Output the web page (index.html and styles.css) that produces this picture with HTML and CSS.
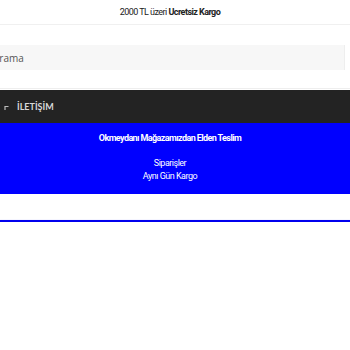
FILE: index.html
```html
<!DOCTYPE html>
<html lang="tr">
<head>
    <meta charset="UTF-8">
    <meta name="viewport" content="width=device-width, initial-scale=1.0">
    <title>İletişim</title>
    <link rel="stylesheet" href="styles.css">
</head>
<body>
  <div class="topbar">2000 TL üzeri <b>Ucretsiz Kargo</b></div>

  <div class="search-row">
    <input type="text" class="search" placeholder="Arama">
  </div>

  <div class="menu-bar">
    <svg class="menu-icon" width="5" height="5" viewBox="0 0 5 5">
      <path d="M1 5 V1.5 H4.5" fill="none" stroke="#bbb" stroke-width="1.2"/>
    </svg>
    <span class="menu-title">İLETİŞİM</span>
  </div>

  <div class="info-box">
    <p class="info-head">Okmeydanı Mağazamızdan Elden Teslim</p>
    <p class="info-line">Siparişler</p>
    <p class="info-line">Aynı Gün Kargo</p>
  </div>

  <div class="spacer"></div>
  <div class="blue-line"></div>
</body>
</html>
```

FILE: styles.css
```css
body {
  margin: 0;
  font-family: Roboto, "Open Sans", sans-serif;
  background: #fff;
  color: #222;
}
.topbar {
  height: 24px;
  line-height: 24px;
  padding-right: 10px;
  text-align: center;
  font-size: 9px;
  letter-spacing: -0.55px;
  border-bottom: 1px solid #f0f0f0;
}
.topbar b {
  font-weight: 700;
}
.search-row {
  padding: 20px 0 18px;
  border-bottom: 1px solid #eee;
}
.search {
  display: block;
  box-sizing: border-box;
  width: 352px;
  height: 25px;
  margin-left: -7px;
  padding: 0;
  border: none;
  border-right: 1px solid #eee;
  background: #f7f7f7;
  font-family: "Open Sans", sans-serif;
  font-size: 10px;
  outline: none;
}
.search::placeholder {
  color: #555;
}
.menu-bar {
  margin-top: 1px;
  height: 33px;
  background: #232323;
  display: flex;
  align-items: center;
  color: #ddd;
}
.menu-icon {
  margin: 2px 8px 0 4px;
}
.menu-title {
  font-family: Lato, sans-serif;
  font-weight: 700;
  font-size: 9px;
  color: #d8d8d8;
}
.info-box {
  background: #0000ff;
  color: #fff;
  text-align: center;
  padding: 9px 10px 11px 0;
  font-size: 9px;
  letter-spacing: -0.5px;
}
.info-box p {
  margin: 0;
}
.info-head {
  font-weight: 700;
  letter-spacing: -0.6px;
  line-height: 12px;
  margin-bottom: 13px !important;
}
.info-line {
  line-height: 13px;
}
.spacer {
  height: 26px;
}
.blue-line {
  height: 2px;
  background: #0000ee;
  box-shadow: 0 0 1px #99f;
}
```
